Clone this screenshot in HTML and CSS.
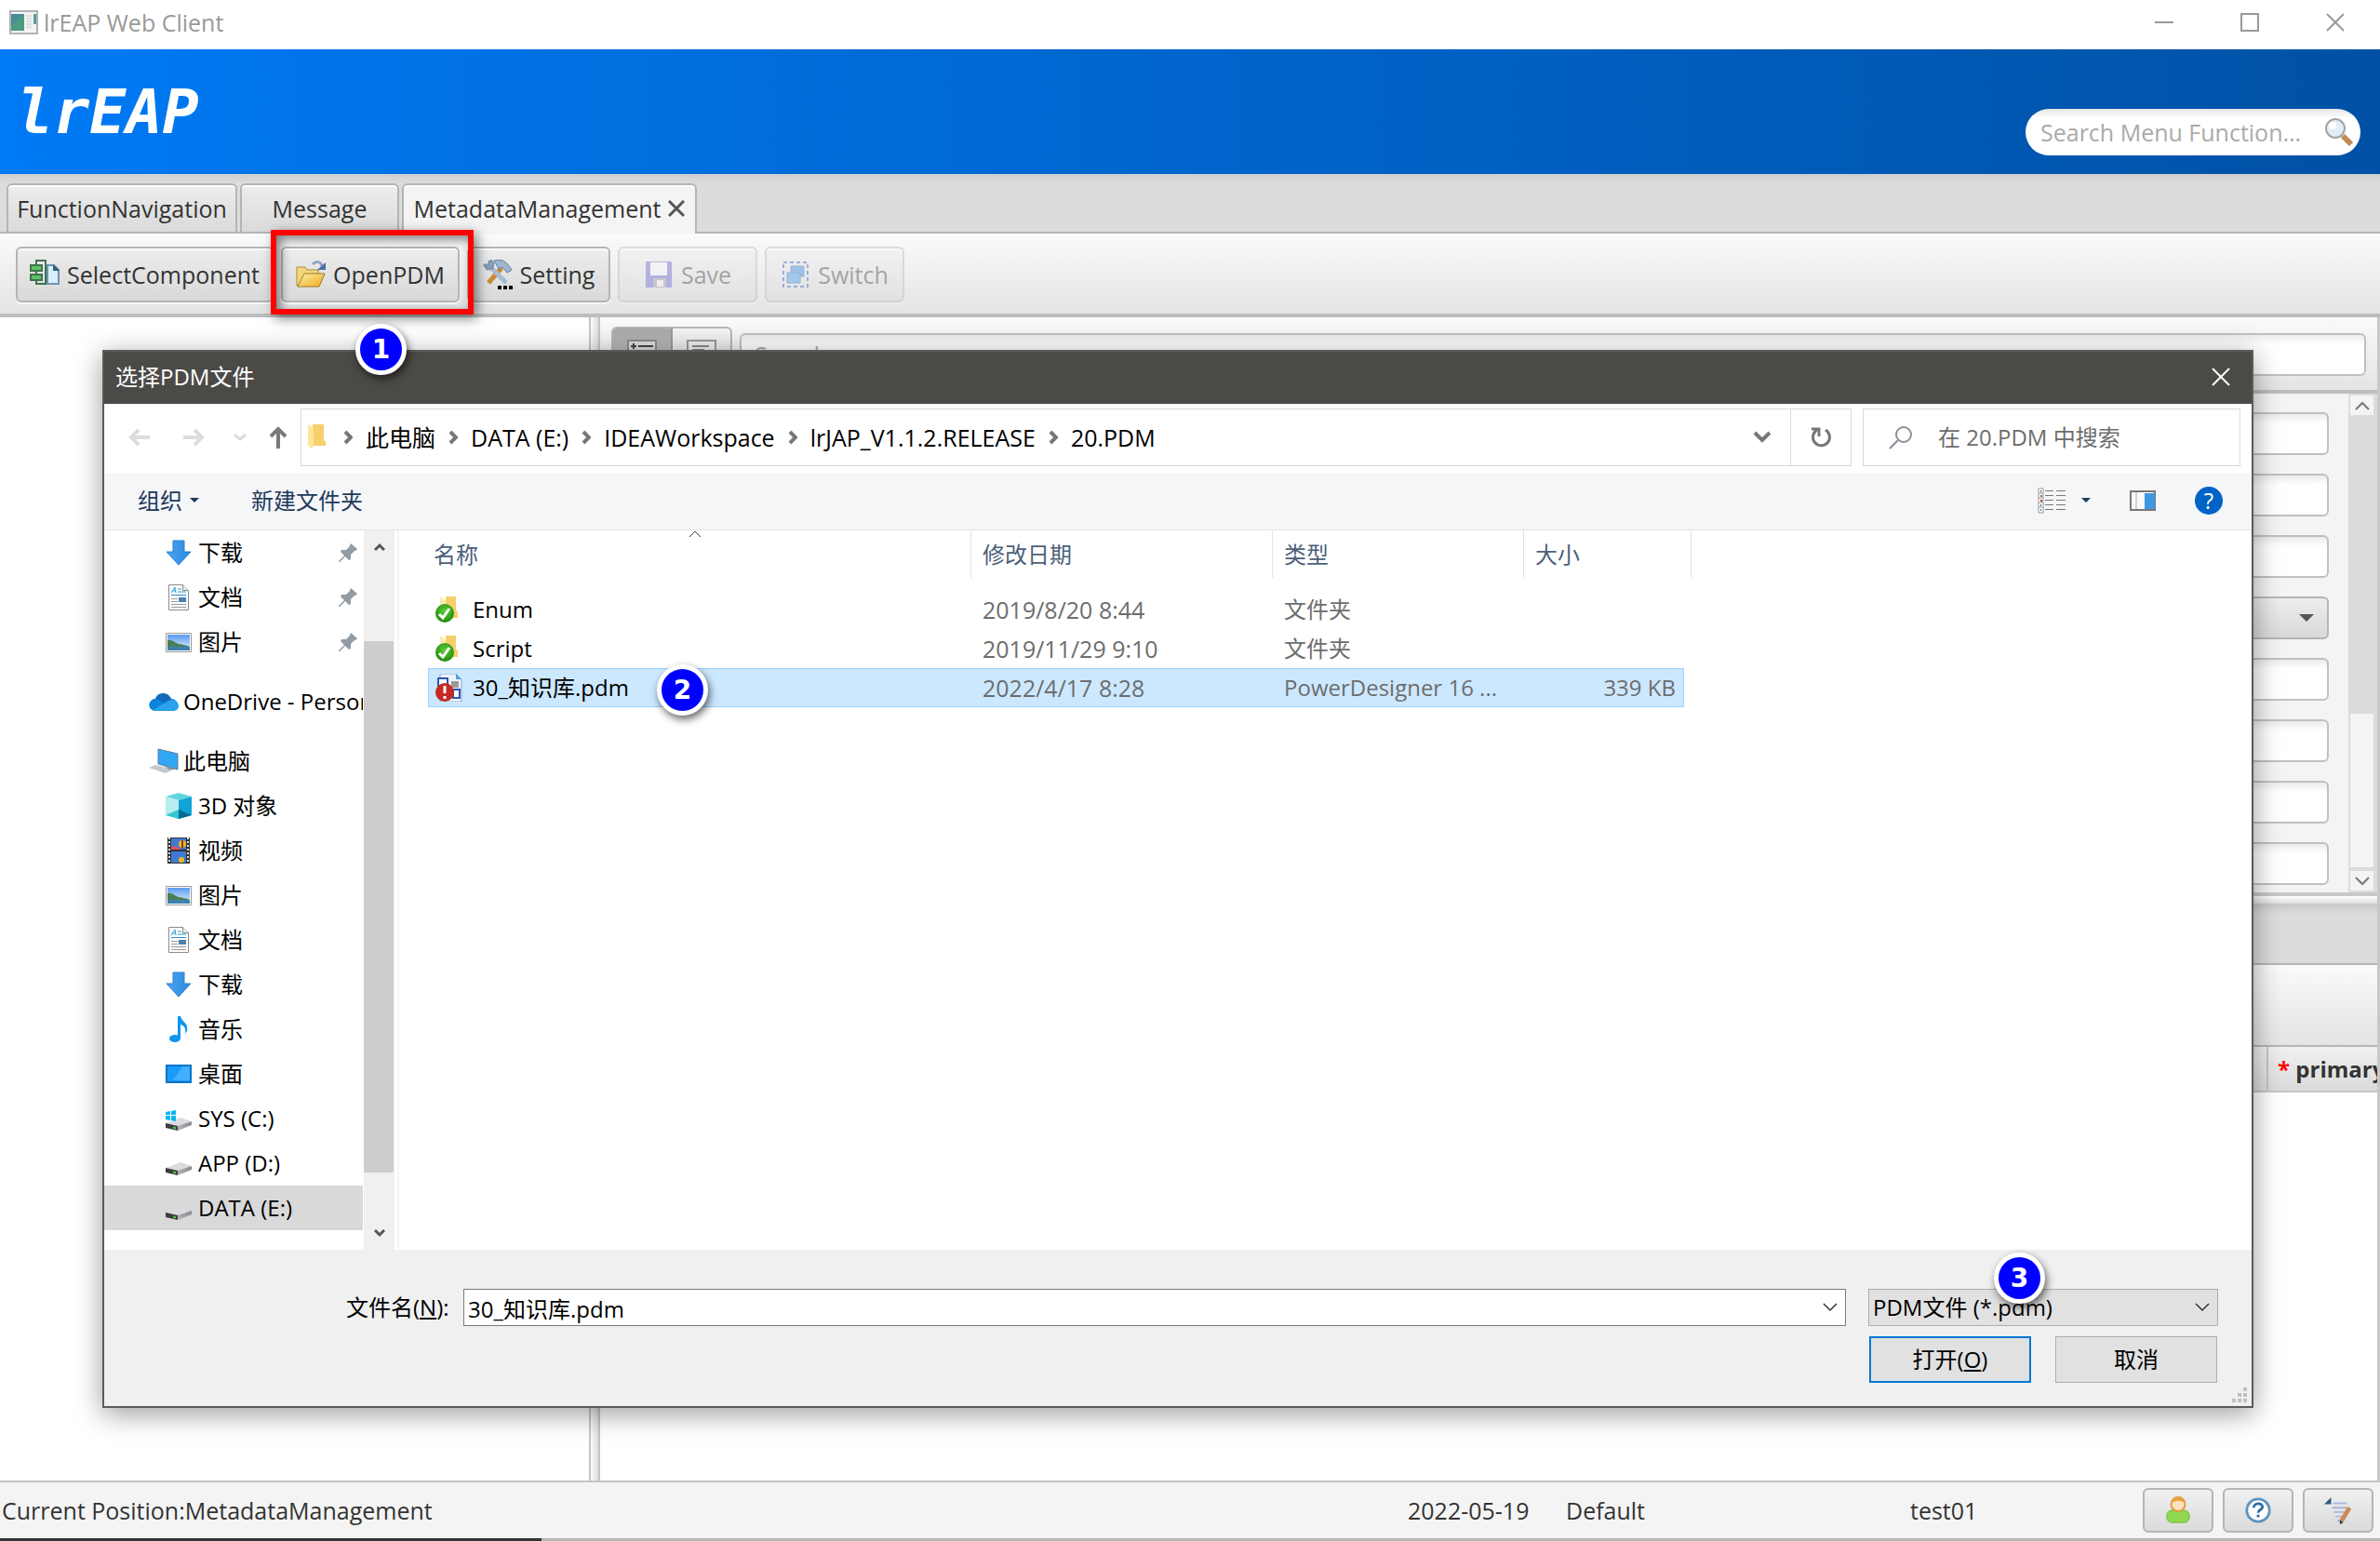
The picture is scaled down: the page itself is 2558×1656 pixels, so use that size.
FILE: index.html
```html
<!DOCTYPE html>
<html lang="zh-CN">
<head>
    <meta charset="UTF-8">
    <meta name="viewport" content="width=device-width, initial-scale=1.0">
    <title>lrEAP Web Client</title>
    <link rel="stylesheet" href="styles.css">
</head>
<body>
    <!-- shared icons -->
    <svg class="defs" aria-hidden="true">
        <defs>
            <linearGradient id="gFolder" x1="0" y1="0" x2="1" y2="1">
                <stop offset="0" stop-color="#fff0a8"/><stop offset="1" stop-color="#eea91c"/>
            </linearGradient>
            <linearGradient id="gSky" x1="0" y1="0" x2="0" y2="1">
                <stop offset="0" stop-color="#5a9bf0"/><stop offset="1" stop-color="#e4f1fc"/>
            </linearGradient>
            <linearGradient id="gBlue" x1="0" y1="0" x2="1" y2="0">
                <stop offset="0" stop-color="#4aa3ef"/><stop offset="1" stop-color="#2a8be0"/>
            </linearGradient>
            <linearGradient id="gDrive" x1="0" y1="0" x2="1" y2="0">
                <stop offset="0" stop-color="#b4b4b8"/><stop offset="1" stop-color="#8a8a8e"/>
            </linearGradient>
            <radialGradient id="gGreen" cx=".5" cy=".4" r=".6">
                <stop offset="0" stop-color="#5fd03c"/><stop offset="1" stop-color="#1f8a0c"/>
            </radialGradient>
        </defs>
        <symbol id="download" viewBox="0 0 28 28">
            <path d="M8 1h12v12h7L14 27 1 13h7z" fill="url(#gBlue)" stroke="#2b7fc9"/>
        </symbol>
        <symbol id="doc" viewBox="0 0 28 28">
            <path d="M3.500.500h15l6 6v21h-21z" fill="#fdfdfd" stroke="#8c8c8c"/>
            <path d="M18.500.500v6h6" fill="#eee" stroke="#8c8c8c"/>
            <path d="M6 9l4-6 1 6M7.500 7h3M13 5h4M13 8h9" stroke="#2a9bd8" fill="none"/>
            <path d="M6 11.500h16" stroke="#2a8fd0"/>
            <path d="M6 15.500h7M6 18.500h7M6 21.500h16M6 24.500h16" stroke="#999"/>
            <path d="M14 14h8v5h-8z" fill="#4c7fb0"/>
        </symbol>
        <symbol id="picture" viewBox="0 0 28 28">
            <path d="M.500 4.500h27v20H.500z" fill="#fff" stroke="#9a9a9a"/>
            <path d="M2 6h24v17H2z" fill="url(#gSky)"/>
            <path d="M2 12c5-1 8 3 12 4s8 1 12 3v4H2z" fill="#4a7f56"/>
            <path d="M2 19h24v4H2z" fill="#3f7fae"/>
        </symbol>
        <symbol id="drive" viewBox="0 0 28 28">
            <path d="M0 19l16-6 12 4-15 6z" fill="#dcdce0"/>
            <path d="M0 19l13 3v5L0 24z" fill="#3c3c3e"/>
            <path d="M13 22l15-5v4l-15 6z" fill="url(#gDrive)"/>
            <path d="M8 23.500l3 1" stroke="#4fd04a" stroke-width="2"/>
        </symbol>
        <symbol id="pin" viewBox="0 0 20 20">
            <path d="M13 0l7 6-2 2-1 0-4 4 0 5-2 1-4-4-6 6-1 0 0-1 6-6-4-4 1-2h5l4-4V2z" fill="#919ca5"/>
        </symbol>
        <symbol id="folder" viewBox="0 0 20 28">
            <path d="M5 0h12v17l2 1v5H5z" fill="#f7cf6b"/>
            <path d="M0 0l6 4v18l-1 5-5-4z" fill="#fde59b"/>
        </symbol>
        <symbol id="crumb" viewBox="0 0 10 16">
            <path d="M2 2l6 6-6 6" fill="none" stroke="#777" stroke-width="4"/>
        </symbol>
        <symbol id="folderOk" viewBox="0 0 30 30">
            <path d="M11 1h11v15l2 1v7H11z" fill="#f7cf6b"/>
            <path d="M5 1l6 5v14H5z" fill="#fde9ae"/>
            <circle cx="10" cy="19" r="10" fill="url(#gGreen)"/>
            <path d="M4 20l4 4 7-10" fill="none" stroke="#fff" stroke-width="3"/>
        </symbol>
        <symbol id="cross" viewBox="0 0 20 20">
            <path d="M1 1l18 18M19 1L1 19" fill="none" stroke="currentColor" stroke-width="2"/>
        </symbol>
    </svg>

    <header class="titlebar">
        <svg class="app-icon" viewBox="0 0 31 26">
            <path d="M1 1h29v24H1z" fill="#f4f4f4" stroke="#aeb4ba" stroke-width="2"/>
            <path d="M2 4h14v18H2z" fill="#4b9a82"/>
            <path d="M2 4h14L2 16z" fill="#4a7fa5" opacity=".6"/>
            <path d="M18 6h6M18 9h6M18 12h6M18 15h6M18 18h6" stroke="#c4c8cc"/>
            <path d="M26 4h3v11h-3z" fill="#5a9c93"/>
        </svg>
        <span class="app-title">lrEAP Web Client</span>
        <button class="win-btn" aria-label="Minimize"><svg viewBox="0 0 20 20"><path d="M0 10h20" stroke="#999" stroke-width="2"/></svg></button>
        <button class="win-btn" aria-label="Maximize"><svg viewBox="0 0 20 20"><path d="M1 1h18v18H1z" fill="none" stroke="#999" stroke-width="2"/></svg></button>
        <button class="win-btn" aria-label="Close"><svg viewBox="0 0 20 20"><use href="#cross"/></svg></button>
    </header>

    <div class="banner">
        <h1 class="logo">lrEAP</h1>
        <div class="menu-search">
            <input type="text" placeholder="Search Menu Function..." aria-label="Search Menu Function">
            <svg viewBox="0 0 32 32">
                <path d="M20 20l9 9" stroke="#c08a55" stroke-width="6"/>
                <circle cx="12" cy="12" r="10" fill="#e3edf8" stroke="#a3a3a3" stroke-width="2"/>
                <circle cx="9" cy="9" r="4" fill="#fff"/>
            </svg>
        </div>
    </div>

    <nav class="tabs">
        <button class="tab tab-nav">FunctionNavigation</button>
        <button class="tab tab-msg">Message</button>
        <button class="tab tab-meta active">MetadataManagement
            <svg viewBox="0 0 18 18"><path d="M1 1l16 16M17 1L1 17" stroke="#555" stroke-width="3"/></svg>
        </button>
    </nav>

    <div class="toolbar">
        <button class="tool tool-select">
            <svg viewBox="0 0 32 32">
                <path d="M7 6V1h10v25H7v-5M7 12v3" fill="none" stroke="#3f7350" stroke-width="2"/>
                <path d="M1 6h12v6H1zM1 16h12v6H1z" fill="#5fc063" stroke="#3f7350" stroke-width="2"/>
                <path d="M19 6h7l5 5v15H19z" fill="#d8effb" stroke="#6f93ab" stroke-width="2"/>
                <path d="M25 5v7h7z" fill="#2d5f80"/>
            </svg>
            SelectComponent
        </button>
        <div class="tool-wrap">
            <button class="tool tool-open">
                <svg viewBox="0 0 32 32">
                    <path d="M1 8h9l2 3h12v17H1z" fill="#f6d67a" stroke="#a98a35"/>
                    <path d="M9 15h22l-6 14H2z" fill="url(#gFolder)" stroke="#9a7a24"/>
                    <path d="M18 5c4-4 9-3 10 2" fill="none" stroke="#8fa4c6" stroke-width="3"/>
                    <path d="M32 3v8h-9z" fill="#4c6f9f"/>
                </svg>
                OpenPDM
            </button>
            <div class="highlight"></div>
            <span class="marker marker-1">1</span>
        </div>
        <button class="tool tool-setting">
            <svg viewBox="0 0 32 32">
                <path d="M20 9L6 25" stroke="#c98a34" stroke-width="5"/>
                <path d="M12 1c8-2 13 0 19 10l-5 3-5-6-4 2z" fill="#9fb6cf" stroke="#66809c"/>
                <path d="M7 7l18 18" stroke="#a7bccf" stroke-width="5"/>
                <path d="M7 1v5H2M1 5l4 5 5-1 1-5-3-4" fill="none" stroke="#7e97b0" stroke-width="3"/>
                <path d="M16 28h4v4h-4zM22 28h4v4h-4zM28 28h4v4h-4z" fill="#000"/>
            </svg>
            Setting
        </button>
        <button class="tool tool-off" disabled>
            <svg viewBox="0 0 32 32">
                <path d="M2 2h28v28H2z" fill="#5a58c8"/>
                <path d="M7 3h18v14H7z" fill="#f6f6ff"/>
                <path d="M10 20h14v10H10z" fill="#8e8e9c"/>
                <path d="M14 22h7v7h-7z" fill="#f2f2f2"/>
            </svg>
            Save
        </button>
        <button class="tool tool-off" disabled>
            <svg viewBox="0 0 32 32">
                <path d="M3 3h26v26H3z" fill="none" stroke="#1f50b4" stroke-width="2" stroke-dasharray="4 3"/>
                <path d="M11 7h14v11H11z" fill="#2a7fd0" stroke="#1a58b0"/>
                <path d="M7 14h14v11H7z" fill="#2f92e8" stroke="#1a58b0"/>
            </svg>
            Switch
        </button>
    </div>

    <main class="workspace">
        <section class="pane-left"></section>
        <div class="split-v"></div>
        <section class="pane-right">
            <div class="filter-bar">
                <div class="toggle">
                    <button class="pressed" aria-label="Tree">
                        <svg viewBox="0 0 32 32"><path d="M1 1h30v30H1z" fill="#ddd" stroke="#8b8b8b" stroke-width="2"/><path d="M4 7h6M7 4v6M12 7h16M12 15h16" stroke="#444" stroke-width="2"/></svg>
                    </button>
                    <button aria-label="List">
                        <svg viewBox="0 0 32 32"><path d="M1 1h30v30H1z" fill="#eee" stroke="#999" stroke-width="2"/><path d="M6 7h18M6 11h13" stroke="#888" stroke-width="2"/></svg>
                    </button>
                </div>
                <input type="text" class="filter-input" placeholder="Search" aria-label="Search">
            </div>
            <div class="form-area">
                <div class="fields">
                    <input type="text" aria-label="Field 1">
                    <input type="text" aria-label="Field 2">
                    <input type="text" aria-label="Field 3">
                    <div class="fx-select"><select aria-label="Field 4"><option></option></select></div>
                    <input type="text" aria-label="Field 5">
                    <input type="text" aria-label="Field 6">
                    <input type="text" aria-label="Field 7">
                    <input type="text" aria-label="Field 8">
                </div>
                <div class="fx-scroll">
                    <button aria-label="Up"><svg viewBox="0 0 16 10"><path d="M1 9l7-7 7 7" fill="none" stroke="#777" stroke-width="2"/></svg></button>
                    <div class="fx-track"></div>
                    <div class="fx-thumb"></div>
                    <button aria-label="Down"><svg viewBox="0 0 16 10"><path d="M1 1l7 7 7-7" fill="none" stroke="#777" stroke-width="2"/></svg></button>
                </div>
            </div>
            <div class="split-h"></div>
            <div class="sub-tabs"></div>
            <div class="sub-tools"></div>
            <table class="grid-head">
                <tr><th></th><th class="col-primary"><span class="req">*</span> primary</th></tr>
            </table>
        </section>
    </main>

    <footer class="statusbar">
        <span class="pos">Current Position:MetadataManagement</span>
        <span class="date">2022-05-19</span>
        <span class="dept">Default</span>
        <span class="user">test01</span>
        <button aria-label="User">
            <svg viewBox="0 0 32 32"><rect x="3" y="16" width="26" height="14" rx="6" fill="#8fd850" stroke="#6bb83a"/><circle cx="16" cy="9" r="8" fill="#fde3bd" stroke="#e09a3e" stroke-width="2"/><path d="M8 8c0-9 16-9 16 0-5-4-11-4-16 0z" fill="#e8a03c"/></svg>
        </button>
        <button aria-label="Help">
            <svg viewBox="0 0 32 32"><circle cx="16" cy="16" r="13" fill="#fff" stroke="#5d93bf" stroke-width="3"/><path d="M11 13c0-6 10-6 10-1 0 4-5 3-5 7M16 21v3" fill="none" stroke="#2d6ca2" stroke-width="3"/></svg>
        </button>
        <button aria-label="Note">
            <svg viewBox="0 0 32 32"><path d="M0 9l8-8v8z" fill="#2d5f85"/><path d="M10 8h16M9 13h17M11 18h12M13 23h9M15 28h6" stroke="#a9b6dc" stroke-width="2"/><path d="M29 13L20 28" stroke="#c98a55" stroke-width="5"/><path d="M18 27l4 3-4 2z" fill="#333"/></svg>
        </button>
    </footer>
    <div class="desktop-edge"></div>

    <!-- open file dialog -->
    <div class="dialog" role="dialog" aria-labelledby="dlgTitle">
        <div class="dlg-title">
            <span id="dlgTitle">选择PDM文件</span>
            <button class="dlg-close" aria-label="关闭"><svg viewBox="0 0 20 20"><use href="#cross"/></svg></button>
        </div>
        <div class="dlg-nav">
            <button class="nav-btn" aria-label="后退"><svg width="24" height="24" viewBox="0 0 24 24"><path d="M23 12H3M11 4l-8 8 8 8" fill="none" stroke="#dcdcdc" stroke-width="4"/></svg></button>
            <button class="nav-btn" aria-label="前进"><svg width="24" height="24" viewBox="0 0 24 24"><path d="M1 12h20M13 4l8 8-8 8" fill="none" stroke="#dcdcdc" stroke-width="4"/></svg></button>
            <button class="nav-btn small" aria-label="历史"><svg width="14" height="10" viewBox="0 0 14 10"><path d="M1 2l6 5 6-5" fill="none" stroke="#dcdcdc" stroke-width="3"/></svg></button>
            <button class="nav-btn small" aria-label="上移"><svg width="20" height="24" viewBox="0 0 20 24"><path d="M10 24V3M2 11l8-8 8 8" fill="none" stroke="#7a7a7a" stroke-width="4"/></svg></button>
            <div class="address">
                <svg class="addr-folder" viewBox="0 0 20 28"><use href="#folder"/></svg>
                <svg class="sep"><use href="#crumb"/></svg>
                <a href="#">此电脑</a>
                <svg class="sep"><use href="#crumb"/></svg>
                <a href="#">DATA (E:)</a>
                <svg class="sep"><use href="#crumb"/></svg>
                <a href="#">IDEAWorkspace</a>
                <svg class="sep"><use href="#crumb"/></svg>
                <a href="#">lrJAP_V1.1.2.RELEASE</a>
                <svg class="sep"><use href="#crumb"/></svg>
                <a href="#">20.PDM</a>
                <button class="addr-drop" aria-label="展开"><svg width="20" height="14" viewBox="0 0 20 14"><path d="M2 2l8 8 8-8" fill="none" stroke="#777" stroke-width="4"/></svg></button>
                <button class="addr-refresh" aria-label="刷新"><svg width="24" height="24" viewBox="0 0 24 24"><path d="M17 4a9 9 0 1 1-9 0" fill="none" stroke="#777" stroke-width="3"/><path d="M2 3h8v8" fill="none" stroke="#777" stroke-width="3"/></svg></button>
            </div>
            <div class="dlg-search">
                <svg width="26" height="26" viewBox="0 0 26 26"><circle cx="16" cy="10" r="8" fill="none" stroke="#8a8f98" stroke-width="2"/><path d="M10 16l-9 9" stroke="#8a8f98" stroke-width="2"/></svg>
                <input type="text" placeholder="在 20.PDM 中搜索" aria-label="搜索">
            </div>
        </div>
        <div class="dlg-cmds">
            <button class="cmd">组织 <i class="caret"></i></button>
            <button class="cmd">新建文件夹</button>
            <button class="cmd cmd-view" aria-label="视图">
                <svg width="30" height="28" viewBox="0 0 30 28">
                    <path d="M1 1h5v26H1zM1 6h5M1 11h5M1 16h5M1 21h5" fill="#fff" stroke="#999"/>
                    <path d="M3 3h1v2H3zM3 18h1v2H3zM3 23h1v2H3z" fill="#4a6a8a"/><path d="M3 13h2v2H3z" fill="#d02020"/><path d="M3 8h2v2H3z" fill="#7a8a30"/>
                    <path d="M8 3.500h9M20 3.500h10M8 8.500h9M20 8.500h10M8 13.500h9M20 13.500h10M8 18.500h9M20 18.500h10M8 23.500h9M20 23.500h10" stroke="#777"/>
                </svg>
                <i class="caret"></i>
            </button>
            <button class="cmd" aria-label="预览窗格">
                <svg width="28" height="22" viewBox="0 0 28 22"><path d="M1 1h26v20H1z" fill="#fafafa" stroke="#777" stroke-width="2"/><path d="M7 2v18" stroke="#aaa"/><path d="M16 3h11v17H16z" fill="#3d98e3"/></svg>
            </button>
            <button class="cmd help" aria-label="帮助">?</button>
        </div>
        <div class="dlg-body">
            <ul class="tree">
                <li><svg><use href="#download"/></svg><span>下载</span><svg class="pin"><use href="#pin"/></svg></li>
                <li><svg><use href="#doc"/></svg><span>文档</span><svg class="pin"><use href="#pin"/></svg></li>
                <li><svg><use href="#picture"/></svg><span>图片</span><svg class="pin"><use href="#pin"/></svg></li>
                <li class="root">
                    <svg viewBox="0 0 32 32"><path d="M7 26a6 6 0 0 1 0-13c2-8 14-8 17 0 9 0 9 13 1 13z" fill="#0f6cbd"/><path d="M1 17c3-5 8-5 11-2l8 5-16 5c-4-2-4-6-3-8z" fill="#0a84dc"/><path d="M4 25l17-10c6-3 11 1 11 6 0 3-3 5-6 5H7z" fill="#2aa3ea"/></svg>
                    <span>OneDrive - Personal</span>
                </li>
                <li class="root">
                    <svg viewBox="0 0 32 32"><path d="M10 3l21 5v17l-21-6z" fill="#31a6f5" stroke="#5c7f99"/><path d="M0 23l7-3 19 5-8 4z" fill="#c4c8cb"/><path d="M17 22l9 1 4 2-8 0z" fill="#8e9498"/></svg>
                    <span>此电脑</span>
                </li>
                <li><svg viewBox="0 0 28 28"><path d="M0 4l14-4 14 4-14 4z" fill="#5fd6de"/><path d="M0 4l14 4v20L0 24z" fill="#b9ecec"/><path d="M28 4L14 8v20l14-4z" fill="#0fa3d8"/><path d="M0 24l14-6v10z" fill="#34c6d0"/><path d="M28 24l-14-6v10z" fill="#056a94"/></svg><span>3D 对象</span></li>
                <li><svg viewBox="0 0 28 28"><path d="M2 0h24v28H2z" fill="#333"/><path d="M4 0v28M24 0v28" stroke="#ddd" stroke-width="2" stroke-dasharray="2 2"/><path d="M6 1h16v12H6zM6 15h16v12H6z" fill="#4179d6"/><path d="M6 9l9 2v2H6z" fill="#e4505a"/><circle cx="18" cy="7" r="4" fill="#e9bd1c"/><circle cx="17" cy="24" r="3" fill="#e9bd1c"/><path d="M17 3h2v9h-2z" fill="#a0331e"/></svg><span>视频</span></li>
                <li><svg><use href="#picture"/></svg><span>图片</span></li>
                <li><svg><use href="#doc"/></svg><span>文档</span></li>
                <li><svg><use href="#download"/></svg><span>下载</span></li>
                <li><svg viewBox="0 0 28 28"><ellipse cx="10" cy="24" rx="6" ry="4" fill="#0c96f0"/><path d="M13 0h3c1 6 9 7 7 16l-2 3c1-6-1-9-5-10v15h-3z" fill="#0c96f0"/></svg><span>音乐</span></li>
                <li><svg viewBox="0 0 28 28"><path d="M1 5h26v18H1z" fill="#1a9bfc" stroke="#0b72c4" stroke-width="2"/><path d="M18 6h8v15H8z" fill="#41b0ff"/></svg><span>桌面</span></li>
                <li><svg viewBox="0 0 28 28"><use href="#drive"/><path d="M0 7l5-1v4H0zM6 6l5-1v5H6zM0 11h5v5l-5-1zM6 11h5v6l-5-1z" fill="#0ab6f0"/></svg><span>SYS (C:)</span></li>
                <li><svg><use href="#drive"/></svg><span>APP (D:)</span></li>
                <li class="current"><svg><use href="#drive"/></svg><span>DATA (E:)</span></li>
            </ul>
            <div class="tree-scroll">
                <button aria-label="向上"><svg viewBox="0 0 12 10"><path d="M1 8l5-5 5 5" fill="none" stroke="#555" stroke-width="3"/></svg></button>
                <div class="tree-thumb"></div>
                <button aria-label="向下"><svg viewBox="0 0 12 10"><path d="M1 2l5 5 5-5" fill="none" stroke="#555" stroke-width="3"/></svg></button>
            </div>
            <div class="files">
                <table>
                    <thead>
                        <tr>
                            <th class="c-name">名称<svg class="sort" viewBox="0 0 14 8"><path d="M1 7l6-6 6 6" fill="none" stroke="#444"/></svg></th>
                            <th class="c-date">修改日期</th>
                            <th class="c-type">类型</th>
                            <th class="c-size">大小</th>
                            <th class="c-end"></th>
                        </tr>
                    </thead>
                    <tbody>
                        <tr><td><div class="fname"><svg><use href="#folderOk"/></svg>Enum</div></td><td class="date">2019/8/20 8:44</td><td>文件夹</td><td></td></tr>
                        <tr><td><div class="fname"><svg><use href="#folderOk"/></svg>Script</div></td><td class="date">2019/11/29 9:10</td><td>文件夹</td><td></td></tr>
                        <tr class="selected">
                            <td><div class="fname">
                                <svg viewBox="0 0 30 30"><path d="M5 0h17l6 6v24H5z" fill="#eef3fb" stroke="#8fa3c8"/><path d="M22 0v6h6z" fill="#4fa0e6"/><path d="M3 5h10v8H3zM19 17h7v9h-7z" fill="#fff" stroke="#2a56b0" stroke-width="2"/><path d="M17 8h8v7h-8z" fill="#9a9a9a"/><circle cx="10" cy="20" r="10" fill="#c62a22"/><path d="M10 13v8M10 24v3" stroke="#fff" stroke-width="3"/></svg>30_知识库.pdm
                                <span class="marker marker-2">2</span>
                            </div></td>
                            <td class="date">2022/4/17 8:28</td><td>PowerDesigner 16 ...</td><td class="size">339 KB</td>
                        </tr>
                    </tbody>
                </table>
            </div>
        </div>
        <div class="dlg-foot">
            <div class="foot-name">
                <label for="fileName">文件名(<u>N</u>):</label>
                <div class="combo"><input type="text" id="fileName" value="30_知识库.pdm"><svg viewBox="0 0 16 10"><path d="M1 1l7 7 7-7" fill="none" stroke="#333" stroke-width="1.500"/></svg></div>
            </div>
            <div class="foot-right">
                <div class="combo combo-type">
                    <select aria-label="文件类型"><option>PDM文件 (*.pdm)</option></select>
                    <svg viewBox="0 0 16 10"><path d="M1 1l7 7 7-7" fill="none" stroke="#333" stroke-width="1.500"/></svg>
                    <span class="marker marker-3">3</span>
                </div>
                <div class="foot-btns">
                    <button class="btn primary">打开(<u>O</u>)</button>
                    <button class="btn">取消</button>
                </div>
            </div>
            <svg class="grip" viewBox="0 0 16 16"><path d="M12 0h4v4h-4zM6 6h4v4H6zM12 6h4v4h-4zM0 12h4v4H0zM6 12h4v4H6zM12 12h4v4h-4z" fill="#bfbfbf"/></svg>
        </div>
    </div>
</body>
</html>
```

FILE: styles.css
```css
* {
    box-sizing: border-box;
}
body {
    margin: 0;
    height: 100vh;
    display: flex;
    flex-direction: column;
    overflow: hidden;
    position: relative;
    background: #fff;
    color: #333;
    font-family: "Open Sans", "Noto Sans CJK SC", sans-serif;
    font-size: 25px;
    line-height: 32px;
}
button, input, select {
    font: inherit;
    color: inherit;
    margin: 0;
    padding: 0;
    border: none;
    background: none;
    border-radius: 0;
    outline: none;
}
svg {
    display: block;
    flex: none;
}
.defs {
    position: absolute;
    width: 0;
    height: 0;
}

/* window title */
.titlebar {
    height: 53px;
    flex: none;
    display: flex;
    align-items: center;
    padding: 0 2px 5px 10px;
    color: #999;
}
.app-icon {
    width: 31px;
    height: 26px;
}
.app-title {
    flex: 1;
    margin-left: 6px;
}
.win-btn {
    width: 92px;
    height: 48px;
    display: flex;
    align-items: center;
    justify-content: center;
}
.win-btn svg {
    width: 20px;
    height: 20px;
}

/* banner */
.banner {
    height: 134px;
    flex: none;
    display: flex;
    justify-content: space-between;
    align-items: center;
    padding: 0 21px 0 18px;
    background: linear-gradient(to right, #007af5, #0051a5);
}
.logo {
    margin: 0;
    color: #fff;
    font: italic bold 65px "DejaVu Sans Mono", monospace;
}
.menu-search {
    width: 360px;
    height: 50px;
    margin-top: 44px;
    padding: 0 7px 0 16px;
    display: flex;
    align-items: center;
    border-radius: 25px;
    background: linear-gradient(#e6e6e6, #fff 10px);
}
.menu-search input {
    flex: 1;
    min-width: 0;
}
.menu-search svg {
    width: 32px;
    height: 32px;
}
.menu-search input::placeholder, .filter-input::placeholder {
    color: #aaa;
    opacity: 1;
}

/* tabs */
.tabs {
    height: 64px;
    flex: none;
    display: flex;
    align-items: flex-end;
    gap: 3px;
    padding-left: 7px;
    border-bottom: 2px solid #b5b5b5;
    background: linear-gradient(#cfcfcf, #dcdcdc 10px);
}
.tab {
    height: 52px;
    border: 2px solid #b5b5b5;
    border-bottom: none;
    border-radius: 6px 6px 0 0;
    background: linear-gradient(#ededed, #dadada);
    box-shadow: inset 0 2px 0 #fff;
    white-space: nowrap;
    display: flex;
    align-items: center;
    justify-content: center;
    gap: 8px;
}
.tab svg {
    width: 18px;
    height: 18px;
}
.tab-nav {
    width: 248px;
}
.tab-msg {
    width: 171px;
}
.tab-meta {
    width: 317px;
}
.tab.active {
    height: 54px;
    margin-bottom: -2px;
    padding-bottom: 2px;
    background: #f4f4f4;
}

/* toolbar */
.toolbar {
    height: 90px;
    flex: none;
    display: flex;
    align-items: center;
    gap: 8px;
    padding: 2px 0 0 17px;
    background: linear-gradient(#fafafa, #e4e4e4);
    border-bottom: 4px solid #bdbdbd;
}
.tool {
    height: 60px;
    border: 2px solid #b5b5b5;
    border-radius: 6px;
    background: linear-gradient(#ededed, #d9d9d9);
    box-shadow: inset 0 2px 0 #fff, 0 2px 0 #f8f8f8;
    white-space: nowrap;
    display: flex;
    align-items: center;
    justify-content: center;
    gap: 8px;
}
.tool svg {
    width: 32px;
    height: 32px;
}
.tool-wrap {
    position: relative;
}
.tool-select {
    width: 277px;
}
.tool-open {
    width: 192px;
}
.tool-setting {
    width: 154px;
}
.tool-off {
    width: 150px;
    opacity: .4;
}
.highlight {
    position: absolute;
    left: -11px;
    right: -15px;
    top: -18px;
    bottom: -13px;
    border: 6px solid #f00;
    box-shadow: 4px 4px 12px rgba(0, 0, 0, .5), inset 4px 4px 12px rgba(0, 0, 0, .5);
    z-index: 2;
}

/* numbered markers */
.marker {
    position: absolute;
    width: 55px;
    height: 55px;
    border: 5px solid #fff;
    border-radius: 50%;
    background: #00f;
    color: #fff;
    font: bold 28px/45px "DejaVu Sans", sans-serif;
    text-align: center;
    box-shadow: 2px 4px 8px rgba(0, 0, 0, .6);
    z-index: 20;
}
.marker-1 {
    left: 80px;
    top: 83px;
}
.marker-2 {
    left: 238px;
    top: -9px;
}
.marker-3 {
    left: 134px;
    top: -40px;
}

/* workspace behind the dialog */
.workspace {
    flex: 1;
    min-height: 0;
    display: flex;
    border-right: 3px solid #c8c8c8;
}
.pane-left {
    width: 633px;
}
.split-v {
    width: 12px;
    border-left: 2px solid #c4c4c4;
    border-right: 2px solid #c4c4c4;
    background: linear-gradient(to right, #fafafa, #dedede);
}
.pane-right {
    flex: 1;
    min-width: 0;
    display: flex;
    flex-direction: column;
}
.filter-bar {
    height: 82px;
    flex: none;
    display: flex;
    gap: 8px;
    padding: 10px 12px 0;
    background: linear-gradient(#fafafa, #e4e4e4);
    border-bottom: 4px solid #bdbdbd;
}
.toggle {
    display: flex;
    height: 60px;
    width: 130px;
    border: 2px solid #b5b5b5;
    border-radius: 6px;
    overflow: hidden;
    background: linear-gradient(#f4f4f4, #d9d9d9);
}
.toggle button {
    flex: 1;
    display: flex;
    justify-content: center;
    padding-top: 12px;
}
.toggle .pressed {
    background: linear-gradient(#a9a9a9, #d0d0d0);
    border-right: 2px solid #999;
}
.toggle svg {
    width: 32px;
    height: 32px;
}
.filter-input {
    flex: 1;
    height: 46px;
    margin-top: 7px;
    padding-left: 14px;
    border: 2px solid #c0c0c0;
    border-radius: 6px;
    background: linear-gradient(#ececec, #fff 10px);
}
.form-area {
    height: 540px;
    flex: none;
    display: flex;
    background: #f4f4f4;
    border-bottom: 4px solid #c8c8c8;
}
.fields {
    flex: 1;
    display: flex;
    flex-direction: column;
    gap: 20px;
    padding: 20px 21px 0 240px;
}
.fields input, .fx-select {
    height: 46px;
    border: 2px solid #c0c0c0;
    border-radius: 6px;
    background: linear-gradient(#ececec, #fff 10px);
}
.fields .fx-select {
    position: relative;
    border-color: #b5b5b5;
    background: linear-gradient(#ededed, #d9d9d9);
}
.fx-select select {
    width: 100%;
    height: 100%;
    appearance: none;
}
.fx-select::after {
    content: "";
    position: absolute;
    right: 14px;
    top: 17px;
    border: 8px solid transparent;
    border-top-color: #555;
    border-bottom: none;
}
.fx-scroll {
    width: 31px;
    display: flex;
    flex-direction: column;
    padding: 2px 4px 2px 2px;
    background: #dcdcdc;
}
.fx-scroll button {
    height: 21px;
    background: #f4f4f4;
    display: flex;
    align-items: center;
    justify-content: center;
}
.fx-scroll svg {
    width: 16px;
    height: 10px;
}
.fx-track {
    flex: 1;
}
.fx-thumb {
    height: 165px;
    margin-bottom: 4px;
    background: #f4f4f4;
}
.split-h {
    height: 8px;
    flex: none;
    background: linear-gradient(#fff, #dedede);
}
.sub-tabs {
    height: 66px;
    flex: none;
    background: linear-gradient(#c8c8c8, #dcdcdc 12px);
    border-bottom: 2px solid #b5b5b5;
}
.sub-tools {
    height: 88px;
    flex: none;
    background: linear-gradient(#fafafa, #e4e4e4);
    border-bottom: 2px solid #b5b5b5;
}
.grid-head {
    width: 100%;
    table-layout: fixed;
    border-collapse: collapse;
    background: linear-gradient(#f0f0f0, #dadada);
    font-size: 24px;
}
.grid-head th {
    height: 48px;
    padding: 0;
    border-bottom: 2px solid #c4c4c4;
    text-align: left;
}
.grid-head .col-primary {
    width: 118px;
    padding-left: 10px;
    border-left: 2px solid #c4c4c4;
    white-space: nowrap;
    overflow: hidden;
}
.req {
    color: #f00;
}

/* status bar */
.statusbar {
    height: 62px;
    flex: none;
    display: flex;
    align-items: center;
    background: #f4f4f4;
    border-top: 2px solid #c4c4c4;
    padding: 0 7px 0 2px;
    gap: 10px;
}
.statusbar .pos {
    flex: 1;
}
.statusbar .date {
    width: 160px;
}
.statusbar .dept {
    width: 360px;
}
.statusbar .user {
    width: 240px;
}
.statusbar button {
    width: 76px;
    height: 48px;
    border: 2px solid #b5b5b5;
    border-radius: 6px;
    background: linear-gradient(#f0f0f0, #dadada);
    display: flex;
    align-items: center;
    justify-content: center;
}
.statusbar svg {
    width: 30px;
    height: 30px;
}
.desktop-edge {
    height: 3px;
    flex: none;
    background: linear-gradient(to right, #333438 582px, #b5b5b5 582px);
}

/* file dialog */
.dialog {
    position: absolute;
    left: 110px;
    right: 136px;
    top: 376px;
    bottom: 143px;
    display: flex;
    flex-direction: column;
    border: 2px solid #5a5a58;
    background: #fff;
    color: #000;
    font-size: 24px;
    box-shadow: 0 6px 28px rgba(0, 0, 0, .4);
    z-index: 10;
}
.dlg-title {
    height: 56px;
    flex: none;
    display: flex;
    align-items: center;
    justify-content: space-between;
    padding: 0 23px 2px 12px;
    background: #4c4a47;
    color: #fff;
}
.dlg-close svg {
    width: 20px;
    height: 20px;
}
.dlg-nav {
    height: 74px;
    flex: none;
    display: flex;
    align-items: center;
    padding: 0 12px 2px 9px;
}
.nav-btn {
    width: 58px;
    height: 60px;
    display: flex;
    align-items: center;
    justify-content: center;
}
.nav-btn.small {
    width: 41px;
}
.address {
    flex: 1;
    height: 62px;
    margin-left: 4px;
    padding-left: 7px;
    display: flex;
    align-items: center;
    gap: 14px;
    border: 1px solid #d9d9d9;
    font-size: 25px;
    white-space: nowrap;
}
.address a {
    color: #000;
    text-decoration: none;
}
.addr-folder {
    width: 20px;
    height: 28px;
    margin-right: 4px;
}
.sep {
    width: 10px;
    height: 16px;
}
.addr-drop {
    margin-left: auto;
    margin-right: 6px;
}
.addr-refresh {
    width: 65px;
    height: 60px;
    border-left: 1px solid #d9d9d9;
    display: flex;
    align-items: center;
    justify-content: center;
}
.dlg-search {
    width: 406px;
    height: 62px;
    margin-left: 12px;
    padding-left: 27px;
    display: flex;
    align-items: center;
    gap: 27px;
    border: 1px solid #d9d9d9;
}
.dlg-search input {
    flex: 1;
    min-width: 0;
}
.dlg-search input::placeholder {
    color: #6d6d6d;
    opacity: 1;
}
.dlg-cmds {
    height: 62px;
    flex: none;
    display: flex;
    align-items: center;
    gap: 42px;
    padding: 0 31px 2px 36px;
    background: #f5f6f8;
    border-bottom: 1px solid #e4e6e9;
    color: #1e395b;
}
.cmd {
    display: flex;
    align-items: center;
    gap: 8px;
    margin-right: 14px;
}
.cmd-view {
    margin-left: auto;
    margin-right: 0;
    gap: 17px;
}
.cmd-view ~ .cmd {
    margin-right: 0;
}
.caret {
    border: 5px solid transparent;
    border-top-color: #1e395b;
    border-bottom: none;
}
.help {
    width: 30px;
    height: 30px;
    justify-content: center;
    border-radius: 50%;
    background: #0063c6;
    color: #fff;
}
.dlg-body {
    flex: 1;
    min-height: 0;
    display: flex;
}
.tree {
    width: 278px;
    margin: 0;
    padding: 0;
    list-style: none;
    overflow: hidden;
}
.tree li {
    height: 48px;
    display: flex;
    align-items: center;
    gap: 7px;
    padding: 0 6px 0 66px;
    white-space: nowrap;
}
.tree li svg {
    width: 28px;
    height: 28px;
}
.tree li span {
    flex: 1;
}
.tree li .pin {
    width: 20px;
    height: 20px;
}
.tree .root {
    margin: 16px 0 0;
    padding-left: 48px;
    gap: 5px;
}
.tree .root svg {
    width: 32px;
    height: 32px;
}
.tree .current {
    background: #d9d9d9;
}
.tree-scroll {
    width: 33px;
    margin-left: 1px;
    background: #f0f0f0;
    display: flex;
    flex-direction: column;
    justify-content: space-between;
}
.tree-scroll button {
    height: 36px;
    display: flex;
    align-items: center;
    justify-content: center;
}
.tree-scroll svg {
    width: 12px;
    height: 10px;
}
.tree-thumb {
    flex: 1;
    margin: 83px 1px 47px 0;
    background: #cdcdcd;
}
.files {
    flex: 1;
    margin-left: 3px;
    padding-left: 31px;
    border-left: 2px solid #f5f5f5;
}
.files table {
    width: 1358px;
    table-layout: fixed;
    border-collapse: separate;
    border-spacing: 0;
}
.files th {
    height: 51px;
    padding: 0 0 0 12px;
    border-left: 1px solid #e2e2e2;
    color: #4c607a;
    font-weight: normal;
    text-align: left;
}
.files .c-name {
    width: 583px;
    padding-left: 6px;
    border-left: none;
    position: relative;
}
.c-date {
    width: 324px;
}
.c-type {
    width: 270px;
}
.c-size {
    width: 173px;
}
.files .c-end {
    width: 8px;
    padding: 0;
    border-left: none;
    border-right: 1px solid #e2e2e2;
}
.sort {
    position: absolute;
    left: 48%;
    top: 0;
    width: 14px;
    height: 8px;
}
.files tbody::before {
    content: "";
    display: block;
    height: 13px;
}
.files td {
    height: 42px;
    padding: 0 0 0 13px;
    border-top: 1px solid transparent;
    border-bottom: 1px solid transparent;
    color: #6d6d6d;
}
.files td:first-child {
    padding-left: 8px;
    color: #000;
}
.files td.date {
    font-size: 25px;
}
.files td.size {
    padding-right: 8px;
    text-align: right;
}
.fname {
    position: relative;
    display: flex;
    align-items: center;
    gap: 10px;
}
.fname svg {
    width: 30px;
    height: 30px;
}
.selected td {
    background: #cce8ff;
    border-color: #99d1ff;
}
.files .selected td:first-child {
    border-left: 1px solid #99d1ff;
    padding-left: 7px;
}
.selected td:last-child {
    border-right: 1px solid #99d1ff;
}

/* dialog footer */
.dlg-foot {
    height: 168px;
    flex: none;
    position: relative;
    display: flex;
    align-items: flex-start;
    gap: 24px;
    padding: 42px 36px 0 260px;
    background: #f0f0f0;
}
.foot-name {
    flex: 1;
    display: flex;
    align-items: center;
}
.foot-name label {
    width: 126px;
    white-space: nowrap;
}
.combo {
    flex: 1;
    position: relative;
    height: 40px;
    border: 1px solid #7a7a7a;
    background: #fff;
}
.combo input, .combo select {
    width: 100%;
    height: 100%;
    padding-left: 4px;
    appearance: none;
}
.combo > svg {
    position: absolute;
    right: 8px;
    top: 14px;
    width: 16px;
    height: 10px;
}
.foot-right {
    width: 376px;
    display: flex;
    flex-direction: column;
    gap: 11px;
}
.combo-type {
    flex: none;
    border-color: #adadad;
    background: #e1e1e1;
}
.foot-btns {
    display: flex;
    justify-content: space-between;
    padding: 0 1px;
}
.btn {
    width: 174px;
    height: 50px;
    border: 1px solid #adadad;
    background: #e1e1e1;
}
.btn.primary {
    border: 2px solid #0078d7;
}
.grip {
    position: absolute;
    right: 5px;
    bottom: 4px;
    width: 16px;
    height: 16px;
}
```
